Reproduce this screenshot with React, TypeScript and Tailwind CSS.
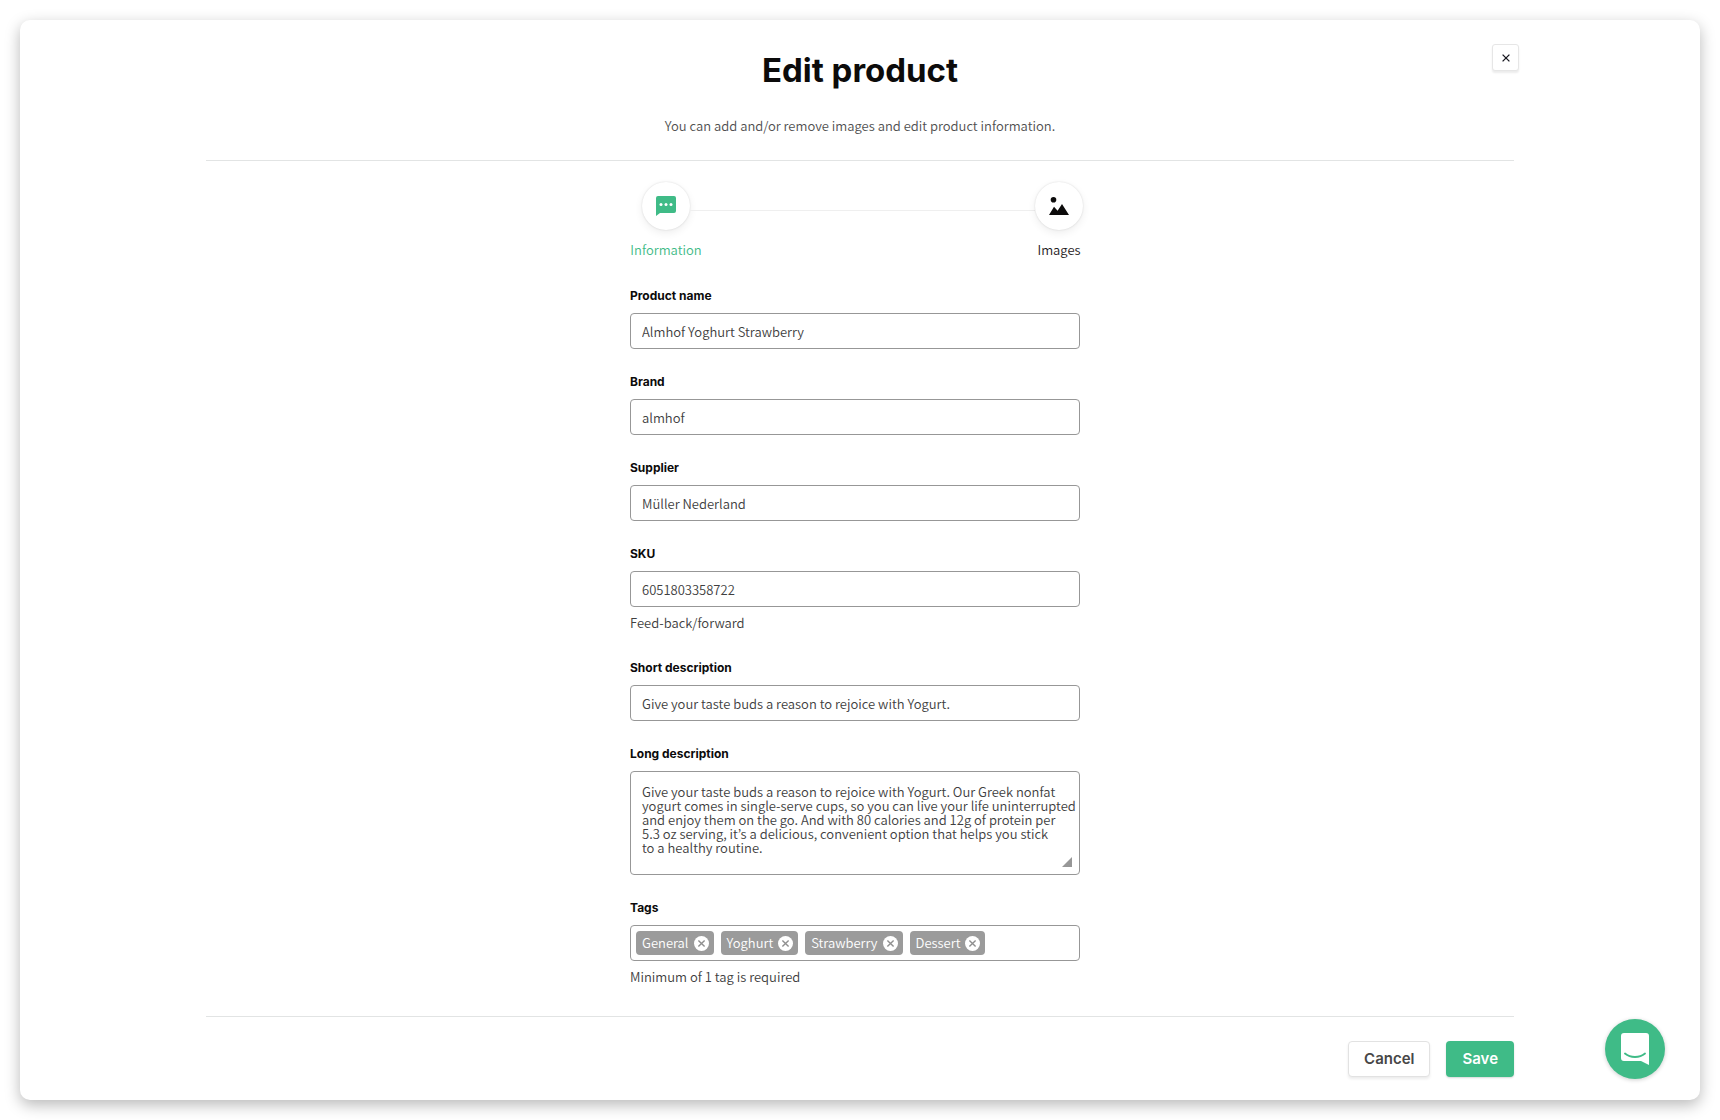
import { useState } from 'react'
import type { ReactNode } from 'react'

const LONG_DESCRIPTION = `Give your taste buds a reason to rejoice with Yogurt. Our Greek nonfat
yogurt comes in single-serve cups, so you can live your life uninterrupted
and enjoy them on the go. And with 80 calories and 12g of protein per
5.3 oz serving, it’s a delicious, convenient option that helps you stick
to a healthy routine.`

interface FieldProps {
  id: string
  label: string
  hint?: string
  children: ReactNode
}

function Field({ id, label, hint, children }: FieldProps) {
  return (
    <div>
      <label htmlFor={id} className="block mb-[6px] font-['Inter',sans-serif] text-[12px] leading-[22px] font-bold text-[#0c0b0b]">
        {label}
      </label>
      {children}
      {hint && <p className="mt-[6px] mb-[2px] text-[13px] leading-5 text-[#404040]">{hint}</p>}
    </div>
  )
}

interface TextFieldProps {
  id: string
  label: string
  hint?: string
  initial: string
}

function TextField({ id, label, hint, initial }: TextFieldProps) {
  const [value, setValue] = useState(initial)

  return (
    <Field id={id} label={label} hint={hint}>
      <input
        id={id}
        type="text"
        value={value}
        onChange={(e) => setValue(e.target.value)}
        className="block w-full h-9 px-[11px] rounded border border-[#979797] bg-white text-[13px] text-[#404040] outline-none focus:border-[#3fbb87]"
      />
    </Field>
  )
}

function Step({ label, active, children }: { label: string; active?: boolean; children: ReactNode }) {
  return (
    <li className={`w-12 flex flex-col items-center ${active ? 'text-[#3fbb87]' : 'text-[#1f2123]'}`}>
      <span className="w-12 h-12 rounded-full bg-white flex items-center justify-center shadow-[0_0_2px_rgba(0,0,0,0.14),0_3px_8px_rgba(0,0,0,0.07)]">
        {children}
      </span>
      <span className="mt-[10px] text-[13px] leading-5 whitespace-nowrap">{label}</span>
    </li>
  )
}

function Tag({ name, onRemove }: { name: string; onRemove: () => void }) {
  return (
    <span className="h-6 pl-[6px] pr-[5px] rounded bg-[#9b9b9b] flex items-center gap-[5px] text-[13px] leading-5 text-white">
      {name}
      <button type="button" onClick={onRemove} aria-label={`Remove ${name}`} className="cursor-pointer">
        <svg viewBox="0 0 15 15" className="block w-[15px] h-[15px]">
          <circle cx="7.5" cy="7.5" r="7.5" fill="#fff" />
          <path d="M4.4 4.4l6.2 6.2M10.6 4.4l-6.2 6.2" stroke="#8f8f8f" strokeWidth="1.4" />
        </svg>
      </button>
    </span>
  )
}

export default function App() {
  const [tags, setTags] = useState(['General', 'Yoghurt', 'Strawberry', 'Dessert'])
  const [longText, setLongText] = useState(LONG_DESCRIPTION)

  return (
    <div className="min-h-screen p-5 bg-white font-['Noto_Sans_CJK_KR',sans-serif] font-[350]">
      <main className="rounded-[10px] bg-white px-6 pb-[23px] shadow-[0_5px_15px_rgba(0,0,0,0.28)]">
        <div className="w-full max-w-[1308px] mx-auto">
          {/* Header */}
          <header className="pb-6 border-b border-[#e2e4e4]">
            <div className="grid grid-cols-[1fr_auto_1fr] items-start pt-6">
              <h1 className="col-start-2 mt-[2px] mb-[2px] font-['Inter',sans-serif] text-[33px] leading-[48px] font-bold text-[#0c0b0b]">
                Edit product
              </h1>
              <button
                type="button"
                aria-label="Close"
                className="justify-self-end -mr-[5px] w-[27px] h-[27px] rounded-[3px] border border-[#e6e6e6] bg-white flex items-center justify-center shadow-[0_2px_2px_rgba(0,0,0,0.08)] cursor-pointer"
              >
                <svg viewBox="0 0 8 8" className="w-2 h-2">
                  <path d="M0.6 0.6l6.8 6.8M7.4 0.6l-6.8 6.8" stroke="#17171f" strokeWidth="1.3" />
                </svg>
              </button>
            </div>
            <p className="mt-5 text-center text-[13px] leading-5 text-[#505050]">
              You can add and/or remove images and edit product information.
            </p>
          </header>

          {/* Form */}
          <form id="product-form" onSubmit={(e) => e.preventDefault()} className="pr-[10px] pb-[27px]">
            <div className="w-full max-w-[450px] mx-auto">
              <ol className="flex items-start pt-[21px] pl-3 -mr-[3px]">
                <Step label="Information" active>
                  <svg viewBox="0 0 20 20" className="w-5 h-5">
                    <path d="M2 0h16a2 2 0 0 1 2 2v13a2 2 0 0 1-2 2H4L0 20V2a2 2 0 0 1 2-2z" fill="#3fbb87" />
                    <circle cx="5" cy="8.5" r="1.5" fill="#fff" />
                    <circle cx="10" cy="8.5" r="1.5" fill="#fff" />
                    <circle cx="15" cy="8.5" r="1.5" fill="#fff" />
                  </svg>
                </Step>
                <li aria-hidden="true" className="flex-1 mt-7 h-px bg-[#efefef]" />
                <Step label="Images">
                  <svg viewBox="0 0 20 18" className="w-5 h-[18px]">
                    <circle cx="4.5" cy="2.8" r="2.8" fill="#0c0b0b" />
                    <path d="M0 18l5-8.3 3.6 4L13 7l7 11z" fill="#0c0b0b" />
                  </svg>
                </Step>
              </ol>

              <div className="mt-[25px] flex flex-col gap-[22px]">
                <TextField id="name" label="Product name" initial="Almhof Yoghurt Strawberry" />
                <TextField id="brand" label="Brand" initial="almhof" />
                <TextField id="supplier" label="Supplier" initial="Müller Nederland" />
                <TextField id="sku" label="SKU" initial="6051803358722" hint="Feed-back/forward" />
                <TextField
                  id="short-description"
                  label="Short description"
                  initial="Give your taste buds a reason to rejoice with Yogurt."
                />

                <Field id="long-description" label="Long description">
                  <div className="relative">
                    <textarea
                      id="long-description"
                      value={longText}
                      onChange={(e) => setLongText(e.target.value)}
                      className="block w-full h-[104px] pl-[11px] pr-0 py-[13px] rounded border border-[#979797] bg-white text-[13px] leading-[14px] text-[#404040] resize-none outline-none overflow-hidden focus:border-[#3fbb87]"
                    />
                    <svg viewBox="0 0 10 10" className="absolute right-2 bottom-2 w-[10px] h-[10px] pointer-events-none">
                      <path d="M10 0v10H0z" fill="#979797" />
                    </svg>
                  </div>
                </Field>

                <Field id="tags" label="Tags" hint="Minimum of 1 tag is required">
                  <div className="h-9 px-[5px] rounded border border-[#979797] bg-white flex items-center gap-[7px]">
                    {tags.map((tag) => (
                      <Tag key={tag} name={tag} onRemove={() => setTags(tags.filter((t) => t !== tag))} />
                    ))}
                    <input id="tags" type="text" className="flex-1 min-w-0 h-6 text-[13px] text-[#404040] outline-none" />
                  </div>
                </Field>
              </div>
            </div>
          </form>

          {/* Actions */}
          <footer className="pt-6 border-t border-[#e2e4e4] flex justify-end gap-4 font-['Inter',sans-serif] text-[15px] leading-5 font-semibold">
            <button
              type="button"
              className="h-9 px-[15px] rounded border border-[#e2e2e2] bg-white text-[#474747] shadow-[0_2px_3px_rgba(0,0,0,0.08)] cursor-pointer"
            >
              Cancel
            </button>
            <button
              type="submit"
              form="product-form"
              className="h-9 px-4 rounded bg-[#3fbb87] text-white shadow-[0_1px_2px_rgba(0,0,0,0.16)] cursor-pointer"
            >
              Save
            </button>
          </footer>
        </div>
      </main>

      {/* Chat launcher */}
      <button
        type="button"
        aria-label="Open chat"
        className="fixed right-[55px] bottom-[41px] w-[60px] h-[60px] rounded-full bg-[#3fbb87] flex items-center justify-center shadow-[0_1px_4px_rgba(0,0,0,0.2)] cursor-pointer"
      >
        <svg viewBox="0 0 28 32" className="w-7 h-8">
          <path d="M3 0h22a3 3 0 0 1 3 3v29l-8-4H3a3 3 0 0 1-3-3V3a3 3 0 0 1 3-3z" fill="#fff" />
          <path d="M4 20.5c5.5 4.6 14.5 4.6 20 0" fill="none" stroke="#3fbb87" strokeWidth="1.9" strokeLinecap="round" />
        </svg>
      </button>
    </div>
  )
}
